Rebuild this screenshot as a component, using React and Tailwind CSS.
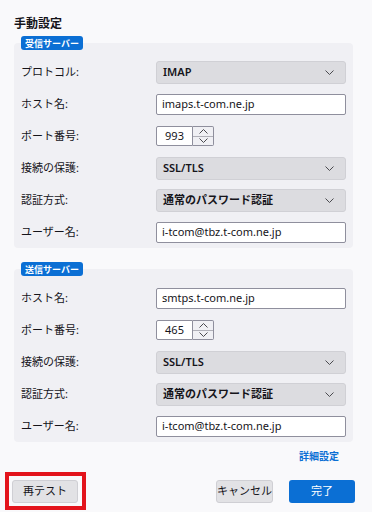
import React from "react";

function Chevron({ up = false, className = "" }) {
  return (
    <svg width="9" height="5" viewBox="0 0 9 5" className={className} fill="none">
      <path
        d={up ? "M0.5 4.5 L4.5 0.5 L8.5 4.5" : "M0.5 0.5 L4.5 4.5 L8.5 0.5"}
        stroke="#4a4a4f"
        strokeWidth="1"
      />
    </svg>
  );
}

function Select({ value }) {
  return (
    <div className="w-[190px] h-[23px] bg-[#dcdce0] rounded-[3px] border border-[#d0d0d5] flex items-center justify-between pl-[6px] pr-[11px]">
      <span className="text-[11px] font-semibold text-[#15141a]">{value}</span>
      <Chevron />
    </div>
  );
}

function Input({ value }) {
  return (
    <div className="w-[190px] h-[21px] bg-white rounded-[2px] border border-[#8f8f9d] flex items-center px-[5px]">
      <span className="text-[11px] text-[#15141a]">{value}</span>
    </div>
  );
}

function Spinner({ value }) {
  return (
    <div className="flex h-[20px]">
      <div className="w-[37px] bg-white border border-[#8f8f9d] rounded-l-[2px] flex items-center justify-center">
        <span className="text-[11px] text-[#15141a]">{value}</span>
      </div>
      <div className="w-[21px] flex flex-col border border-l-0 border-[#8f8f9d] rounded-r-[2px] bg-[#f0f0f4]">
        <div className="flex-1 flex items-center justify-center border-b border-[#b0b0b8]">
          <Chevron up />
        </div>
        <div className="flex-1 flex items-center justify-center">
          <Chevron />
        </div>
      </div>
    </div>
  );
}

function Row({ label, children }) {
  return (
    <div className="h-[32px] flex items-center">
      <span className="w-[142px] pl-[7px] text-[11px] text-[#15141a]">{label}</span>
      {children}
    </div>
  );
}

function Section({ title, children }) {
  return (
    <div className="flex flex-col">
      <div className="relative z-10 ml-[21px] self-start h-[14px] px-[4px] bg-[#0b6fd4] rounded-[3px] flex items-center">
        <span className="text-[9px] font-bold text-white leading-none">{title}</span>
      </div>
      <div className="-mt-[7px] ml-[14px] w-[339px] bg-[#f0f0f4] rounded-[4px] pt-[13px]">
        {children}
      </div>
    </div>
  );
}

export default function App() {
  return (
    <div className="relative w-[372px] h-[512px] overflow-hidden bg-[#f9f9fb] font-['Noto_Sans','Noto_Sans_CJK_JP',sans-serif]">
      <div className="pl-[14px] pt-[10px] h-[36px]">
        <span className="text-[12px] font-bold text-[#15141a]">手動設定</span>
      </div>

      <Section title="受信サーバー">
        <Row label="プロトコル:">
          <Select value="IMAP" />
        </Row>
        <Row label="ホスト名:">
          <Input value="imaps.t-com.ne.jp" />
        </Row>
        <Row label="ポート番号:">
          <Spinner value="993" />
        </Row>
        <Row label="接続の保護:">
          <Select value="SSL/TLS" />
        </Row>
        <Row label="認証方式:">
          <Select value="通常のパスワード認証" />
        </Row>
        <Row label="ユーザー名:">
          <Input value="i-tcom@tbz.t-com.ne.jp" />
        </Row>
      </Section>

      <div className="h-[14px]" />

      <Section title="送信サーバー">
        <Row label="ホスト名:">
          <Input value="smtps.t-com.ne.jp" />
        </Row>
        <Row label="ポート番号:">
          <Spinner value="465" />
        </Row>
        <Row label="接続の保護:">
          <Select value="SSL/TLS" />
        </Row>
        <Row label="認証方式:">
          <Select value="通常のパスワード認証" />
        </Row>
        <Row label="ユーザー名:">
          <Input value="i-tcom@tbz.t-com.ne.jp" />
        </Row>
      </Section>

      <div className="flex justify-end pr-[33px] mt-[6px] h-[16px] items-center">
        <span className="text-[10px] font-bold text-[#0b6fd4]">詳細設定</span>
      </div>

      <div className="flex items-center mt-[16px] px-[12px]">
        <button className="w-[66px] h-[23px] bg-[#e2e2e5] border border-[#cfcfd4] rounded-[3px] text-[11px] text-[#15141a]">
          再テスト
        </button>
        <div className="flex-1" />
        <button className="w-[57px] h-[23px] bg-[#e2e2e5] border border-[#cfcfd4] rounded-[3px] text-[11px] text-[#15141a]">
          キャンセル
        </button>
        <button className="ml-[16px] mr-[5px] w-[66px] h-[23px] bg-[#0b6fd4] rounded-[3px] text-[11px] text-white">
          完了
        </button>
      </div>

      <div className="absolute left-[5px] top-[472px] w-[81px] h-[38px] border-[4px] border-[#e3141c]" />
    </div>
  );
}
